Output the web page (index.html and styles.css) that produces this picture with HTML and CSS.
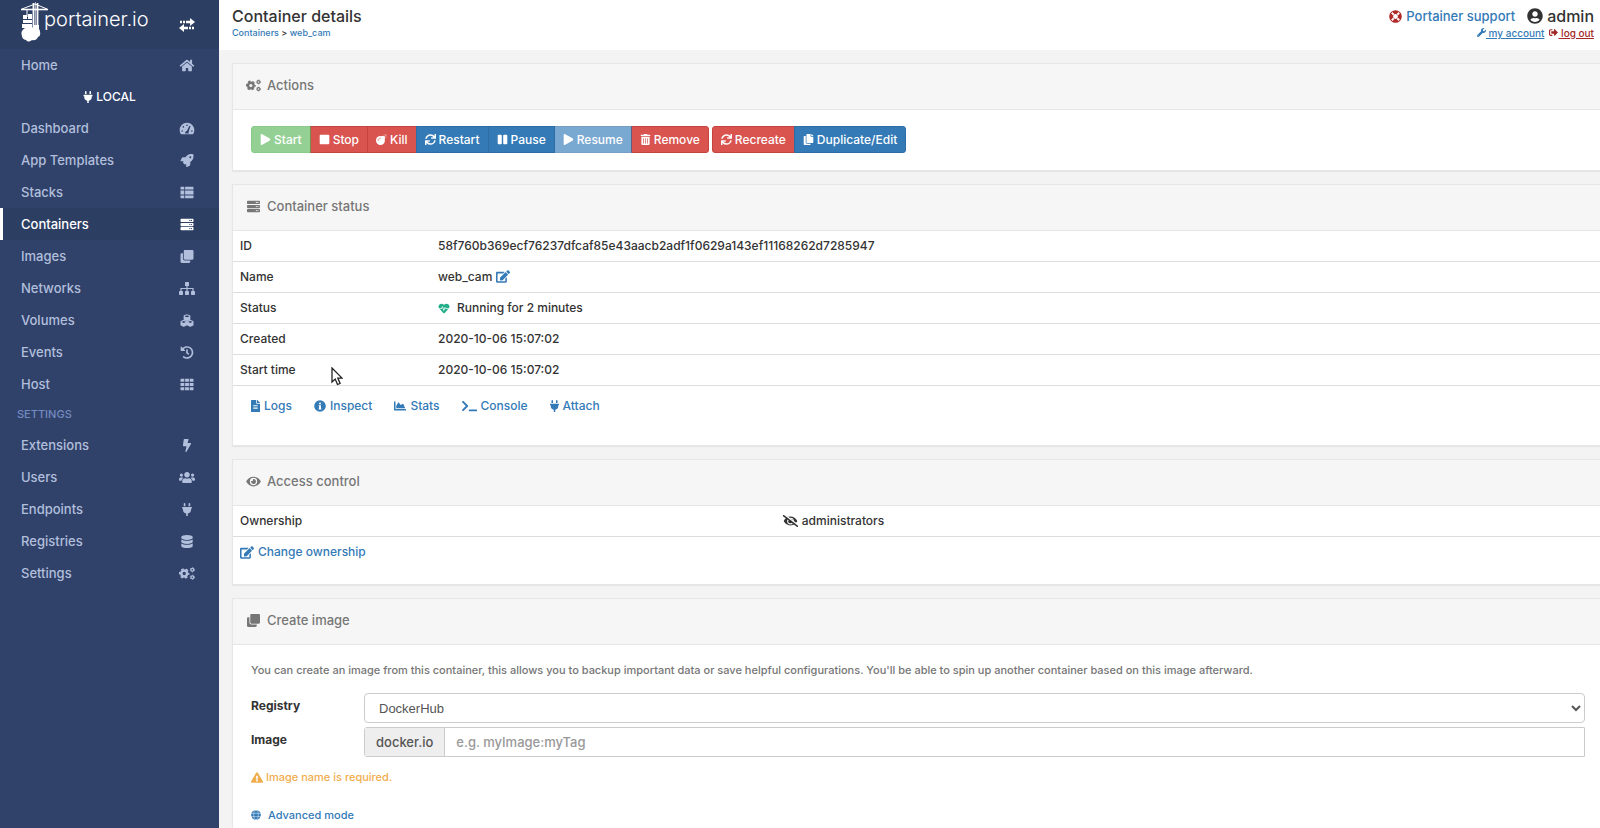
FILE: index.html
```html
<!DOCTYPE html>
<html lang="en">
<head>
<meta charset="utf-8">
<title>Portainer - Container details</title>
<link rel="stylesheet" href="styles.css">
</head>
<body>
<svg class="sprite" aria-hidden="true">
  <symbol id="play" viewBox="0 0 448 512"><path d="M424.4 214.7L72.4 6.6C43.8-10.3 0 6.1 0 47.9V464c0 37.5 40.7 60.1 72.4 41.3l352-208c31.4-18.5 31.5-64.1 0-82.6z"/></symbol>
  <symbol id="stop" viewBox="0 0 448 512"><rect y="32" width="448" height="448" rx="48"/></symbol>
  <symbol id="pause" viewBox="0 0 448 512"><rect y="31" width="192" height="448" rx="48"/><rect x="256" y="31" width="192" height="448" rx="48"/></symbol>
  <symbol id="bomb" viewBox="0 0 512 512"><circle cx="208" cy="304" r="208"/><path d="M270 130l46-46c9-9 25-9 34 0l78 78c9 9 9 25 0 34l-46 46z"/><path d="M385 127l36-36" stroke="currentColor" stroke-width="34"/><path d="M425 60V8M452 87h52M445 67l38-38M405 67l-30-34M445 107l34 30" stroke="currentColor" stroke-width="20" fill="none"/><path d="M96 304c0-62 50-112 112-112" stroke="#d9534f" stroke-width="30" stroke-linecap="round" fill="none"/></symbol>
  <symbol id="sync" viewBox="0 0 512 512"><path d="M440.65 12.57l4 82.77A247.16 247.16 0 0 0 255.83 8C134.73 8 33.91 94.92 12.29 209.82A12 12 0 0 0 24.09 224h49.05a12 12 0 0 0 11.67-9.26 175.91 175.91 0 0 1 317-56.94l-101.46-4.86a12 12 0 0 0-12.57 12v47.41a12 12 0 0 0 12 12H500a12 12 0 0 0 12-12V12a12 12 0 0 0-12-12h-47.37a12 12 0 0 0-11.98 12.57zM255.83 432a175.61 175.61 0 0 1-146-77.8l101.8 4.87a12 12 0 0 0 12.57-12v-47.4a12 12 0 0 0-12-12H12a12 12 0 0 0-12 12V500a12 12 0 0 0 12 12h47.35a12 12 0 0 0 12-12.6l-4.15-82.57A247.17 247.17 0 0 0 255.83 504c121.11 0 221.93-86.92 243.55-201.82a12 12 0 0 0-11.8-14.18h-49.05a12 12 0 0 0-11.67 9.26A175.86 175.86 0 0 1 255.83 432z"/></symbol>
  <symbol id="trash" viewBox="0 0 448 512"><path d="M32 464a48 48 0 0 0 48 48h288a48 48 0 0 0 48-48V128H32zm272-256a16 16 0 0 1 32 0v224a16 16 0 0 1-32 0zm-96 0a16 16 0 0 1 32 0v224a16 16 0 0 1-32 0zm-96 0a16 16 0 0 1 32 0v224a16 16 0 0 1-32 0zM432 32H312l-9.4-18.7A24 24 0 0 0 281.1 0H166.8a23.72 23.72 0 0 0-21.4 13.3L136 32H16A16 16 0 0 0 0 48v32a16 16 0 0 0 16 16h416a16 16 0 0 0 16-16V48a16 16 0 0 0-16-16z"/></symbol>
  <symbol id="copy" viewBox="0 0 448 512"><path d="M320 448v40c0 13.255-10.745 24-24 24H24c-13.255 0-24-10.745-24-24V120c0-13.255 10.745-24 24-24h72v296c0 30.879 25.121 56 56 56h168zm0-344V0H152c-13.255 0-24 10.745-24 24v368c0 13.255 10.745 24 24 24h272c13.255 0 24-10.745 24-24V128H344c-13.2 0-24-10.8-24-24zm120.971-31.029L375.029 7.029A24 24 0 0 0 358.059 0H352v96h96v-6.059a24 24 0 0 0-7.029-16.97z"/></symbol>
  <symbol id="home" viewBox="0 0 576 512"><path d="M280.37 148.26L96 300.11V464a16 16 0 0 0 16 16l112.06-.29a16 16 0 0 0 15.92-16V368a16 16 0 0 1 16-16h64a16 16 0 0 1 16 16v95.64a16 16 0 0 0 16 16.05L464 480a16 16 0 0 0 16-16V300L295.67 148.26a12.19 12.19 0 0 0-15.3 0zM571.6 251.47L488 182.56V44.05a12 12 0 0 0-12-12h-56a12 12 0 0 0-12 12v72.61L318.47 43a48 48 0 0 0-61 0L4.34 251.47a12 12 0 0 0-1.6 16.9l25.5 31A12 12 0 0 0 45.15 301l235.22-193.74a12.19 12.19 0 0 1 15.3 0L530.9 301a12 12 0 0 0 16.9-1.6l25.5-31a12 12 0 0 0-1.7-16.93z"/></symbol>
  <symbol id="plug" viewBox="0 0 384 512"><path d="M320 32a32 32 0 0 0-64 0v96h64zm48 128H16A16 16 0 0 0 0 176v32a16 16 0 0 0 16 16h16v32a160.07 160.07 0 0 0 128 156.8V512h64v-99.2A160.07 160.07 0 0 0 352 256v-32h16a16 16 0 0 0 16-16v-32a16 16 0 0 0-16-16zM128 32a32 32 0 0 0-64 0v96h64z"/></symbol>
  <symbol id="gauge" viewBox="0 0 576 512"><path fill-rule="evenodd" d="M288 32C129 32 0 161 0 320c0 53 14 102 39 145 6 9 16 15 27 15h444c11 0 21-6 27-15 25-43 39-92 39-145C576 161 447 32 288 32zM288 96a32 32 0 1 1 0 64 32 32 0 0 1 0-64zM96 384a32 32 0 1 1 0-64 32 32 0 0 1 0 64zM144 224a32 32 0 1 1 0-64 32 32 0 0 1 0 64zM480 320a32 32 0 1 1 0 64 32 32 0 0 1 0-64zM423 177l-77 230c17 16 19 32 9 41H221c-17-34 6-88 61-95l96-191c11-21 50-9 45 15z"/></symbol>
  <symbol id="rocket" viewBox="0 0 512 512"><path d="M505.12 19.09c-1.19-5.53-6.66-11-12.21-12.18C460.71 0 435.51 0 410.4 0 307.2 0 245.27 55.2 199.05 128H94.83c-16.35 0-35.56 11.88-42.87 26.48L2.53 253.29A28.4 28.4 0 0 0 0 264a24 24 0 0 0 24 24h103.84l-22.47 22.47a32 32 0 0 0 0 45.25l50.9 50.91a32 32 0 0 0 45.26 0L224 384.16V488a24 24 0 0 0 24 24 28.6 28.6 0 0 0 10.69-2.53l98.73-49.39c14.63-7.29 26.5-26.5 26.5-42.86V312.79c72.59-46.3 128-108.4 128-211.09.1-25.2.1-50.4-6.8-82.61zM384 168a40 40 0 1 1 40-40 40 40 0 0 1-40 40z"/></symbol>
  <symbol id="thlist" viewBox="0 0 512 512"><path d="M0 56q0-24 24-24h102q24 0 24 24v80H0zM182 32h306q24 0 24 24v80H182zM0 180h150v152H0zM182 180h330v152H182zM0 376h150v104H24q-24 0-24-24zM182 376h330v80q0 24-24 24H182z"/></symbol>
  <symbol id="server" viewBox="0 0 512 512"><path fill-rule="evenodd" d="M32 32h448q32 0 32 32v64q0 32-32 32H32q-32 0-32-32V64q0-32 32-32zM408 96a24 24 0 1 0 48 0 24 24 0 0 0-48 0zM344 96a24 24 0 1 0 48 0 24 24 0 0 0-48 0zM32 192h448q32 0 32 32v64q0 32-32 32H32q-32 0-32-32v-64q0-32 32-32zM408 256a24 24 0 1 0 48 0 24 24 0 0 0-48 0zM344 256a24 24 0 1 0 48 0 24 24 0 0 0-48 0zM32 352h448q32 0 32 32v64q0 32-32 32H32q-32 0-32-32v-64q0-32 32-32zM408 416a24 24 0 1 0 48 0 24 24 0 0 0-48 0zM344 416a24 24 0 1 0 48 0 24 24 0 0 0-48 0z"/></symbol>
  <symbol id="clone" viewBox="0 0 512 512"><path d="M464 0c26.51 0 48 21.49 48 48v288c0 26.51-21.49 48-48 48H176c-26.51 0-48-21.49-48-48V48c0-26.51 21.49-48 48-48h288M176 416c-44.112 0-80-35.888-80-80V128H48c-26.51 0-48 21.49-48 48v288c0 26.51 21.49 48 48 48h288c26.51 0 48-21.49 48-48v-48H176z"/></symbol>
  <symbol id="sitemap" viewBox="0 0 640 512"><rect x="240" width="160" height="160" rx="28"/><rect y="352" width="160" height="160" rx="28"/><rect x="240" y="352" width="160" height="160" rx="28"/><rect x="480" y="352" width="160" height="160" rx="28"/><path d="M80 360V256h480v104M320 150v210" fill="none" stroke="currentColor" stroke-width="48"/></symbol>
  <symbol id="cubes" viewBox="0 0 512 512"><path fill-rule="evenodd" d="M256 8l116 44q16 6 16 22v128q0 16-14 23l-118 55-118-55q-14-7-14-23V74q0-16 16-22zM172 80v14l84 36 84-36V80l-84-32zM126 230l116 46q14 6 14 22v136q0 16-12 22l-106 48q-12 6-24 0L12 456q-12-6-12-22V298q0-16 14-22zM50 304v12l76 34 76-34v-12l-76-30zM386 230l112 46q14 6 14 22v136q0 16-12 22l-102 48q-12 6-24 0l-106-48q-12-6-12-22V298q0-16 14-22zM310 304v12l76 34 76-34v-12l-76-30z"/></symbol>
  <symbol id="history" viewBox="0 0 512 512"><path d="M504 255.531c.253 136.64-111.18 248.372-247.82 248.468-59.015.042-113.223-20.53-155.822-54.911-11.077-8.94-11.905-25.541-1.839-35.607l11.267-11.267c8.609-8.609 22.353-9.551 31.891-1.984C173.062 425.135 212.781 440 256 440c101.705 0 184-82.311 184-184 0-101.705-82.311-184-184-184-48.814 0-93.149 18.969-126.068 49.932l50.754 50.754c10.08 10.08 2.941 27.314-11.313 27.314H24c-8.837 0-16-7.163-16-16V38.627c0-14.254 17.234-21.393 27.314-11.314l49.372 49.372C129.209 34.136 189.552 8 256 8c136.81 0 247.747 110.78 248 247.531zm-180.912 78.784l9.823-12.63c8.138-10.463 6.253-25.542-4.21-33.679L288 256.349V152c0-13.255-10.745-24-24-24h-16c-13.255 0-24 10.745-24 24v135.651l65.409 50.874c10.463 8.137 25.541 6.253 33.679-4.21z"/></symbol>
  <symbol id="grid" viewBox="0 0 512 512"><path d="M0 56q0-24 24-24h126v120H0zM182 32h150v120H182zM362 32h126q24 0 24 24v96H362zM0 196h150v120H0zM182 196h150v120H182zM362 196h150v120H362zM0 360h150v120H24q-24 0-24-24zM182 360h150v120H182zM362 360h150v96q0 24-24 24H362z"/></symbol>
  <symbol id="bolt" viewBox="0 0 320 512"><path d="M296 160H180.6l42.6-129.8C227.2 15 215.7 0 200 0H56C44 0 33.8 8.9 32.2 20.8l-32 240C-1.7 275.2 9.5 288 24 288h118.7L96.6 482.5c-3.6 15.2 8 29.5 23.3 29.5 8.4 0 16.4-4.4 20.8-12l176-304c9.3-15.9-2.2-36-20.7-36z"/></symbol>
  <symbol id="users" viewBox="0 0 640 512"><path d="M96 224c35.3 0 64-28.7 64-64s-28.7-64-64-64-64 28.7-64 64 28.7 64 64 64zm448 0c35.3 0 64-28.7 64-64s-28.7-64-64-64-64 28.7-64 64 28.7 64 64 64zm32 32h-64c-17.6 0-33.5 7.1-45.1 18.6 40.3 22.1 68.9 62 75.1 109.4h66c17.7 0 32-14.3 32-32v-32c0-35.3-28.7-64-64-64zm-256 0c61.9 0 112-50.1 112-112S381.9 32 320 32 208 82.1 208 144s50.1 112 112 112zm76.8 32h-8.3c-20.8 10-43.9 16-68.5 16s-47.6-6-68.5-16h-8.3C179.6 288 128 339.6 128 403.2V432c0 26.5 21.5 48 48 48h288c26.5 0 48-21.5 48-48v-28.8c0-63.6-51.6-115.2-115.2-115.2zm-223.7-13.4C161.5 263.1 145.6 256 128 256H64c-35.3 0-64 28.7-64 64v32c0 17.7 14.3 32 32 32h65.9c6.3-47.4 34.9-87.3 75.2-109.4z"/></symbol>
  <symbol id="database" viewBox="0 0 448 512"><path d="M448 73.143v45.714C448 159.143 347.667 192 224 192S0 159.143 0 118.857V73.143C0 32.857 100.333 0 224 0s224 32.857 224 73.143zM448 176v102.857C448 319.143 347.667 352 224 352S0 319.143 0 278.857V176c48.125 33.143 136.208 48.572 224 48.572S399.874 209.143 448 176zm0 160v102.857C448 479.143 347.667 512 224 512S0 479.143 0 438.857V336c48.125 33.143 136.208 48.572 224 48.572S399.874 369.143 448 336z"/></symbol>
  <symbol id="cogs" viewBox="0 0 640 512"><g fill="none" stroke="currentColor"><circle cx="208" cy="256" r="118" stroke-width="100"/><circle cx="208" cy="256" r="180" stroke-width="60" stroke-dasharray="100 88.500" stroke-dashoffset="50"/><circle cx="534" cy="106" r="58" stroke-width="50"/><circle cx="534" cy="106" r="90" stroke-width="28" stroke-dasharray="50 44"/><circle cx="534" cy="406" r="58" stroke-width="50"/><circle cx="534" cy="406" r="90" stroke-width="28" stroke-dasharray="50 44"/></g></symbol>
  <symbol id="eye" viewBox="0 0 576 512"><path d="M572.52 241.4C518.29 135.59 410.93 64 288 64S57.68 135.64 3.48 241.41a32.35 32.35 0 0 0 0 29.19C57.71 376.41 165.07 448 288 448s230.32-71.64 284.52-177.41a32.35 32.35 0 0 0 0-29.19zM288 400a144 144 0 1 1 144-144 143.93 143.93 0 0 1-144 144zm0-240a95.31 95.31 0 0 0-25.31 3.79 47.85 47.85 0 0 1-66.9 66.9A95.78 95.78 0 1 0 288 160z"/></symbol>
  <symbol id="eyeslash" viewBox="0 0 640 512"><path transform="translate(32 0)" d="M572.52 241.4C518.29 135.59 410.93 64 288 64S57.68 135.64 3.48 241.41a32.35 32.35 0 0 0 0 29.19C57.71 376.41 165.07 448 288 448s230.32-71.64 284.52-177.41a32.35 32.35 0 0 0 0-29.19zM288 400a144 144 0 1 1 144-144 143.93 143.93 0 0 1-144 144zm0-240a95.31 95.31 0 0 0-25.31 3.79 47.85 47.85 0 0 1-66.9 66.9A95.78 95.78 0 1 0 288 160z"/><path d="M50-26l610 472" stroke="#fff" stroke-width="60"/><path d="M20 24l600 464" stroke="currentColor" stroke-width="62" stroke-linecap="round"/></symbol>
  <symbol id="file" viewBox="0 0 384 512"><path d="M224 136V0H24C10.7 0 0 10.7 0 24v464c0 13.3 10.7 24 24 24h336c13.3 0 24-10.7 24-24V160H248c-13.2 0-24-10.8-24-24zm64 236c0 6.6-5.4 12-12 12H108c-6.6 0-12-5.4-12-12v-8c0-6.6 5.4-12 12-12h168c6.6 0 12 5.4 12 12v8zm0-64c0 6.6-5.4 12-12 12H108c-6.6 0-12-5.4-12-12v-8c0-6.6 5.4-12 12-12h168c6.6 0 12 5.4 12 12v8zm0-72v8c0 6.6-5.4 12-12 12H108c-6.6 0-12-5.4-12-12v-8c0-6.6 5.4-12 12-12h168c6.6 0 12 5.4 12 12zm96-114.1v6.1H256V0h6.1c6.4 0 12.5 2.5 17 7l97.9 98c4.5 4.5 7 10.6 7 16.9z"/></symbol>
  <symbol id="info" viewBox="0 0 512 512"><path fill-rule="evenodd" d="M256 8a248 248 0 1 0 0 496 248 248 0 0 0 0-496zM256 106a42 42 0 1 1 0 84 42 42 0 0 1 0-84zM200 224h96v136h24v40H192v-40h24v-96h-16z"/></symbol>
  <symbol id="chart" viewBox="0 0 512 512"><path d="M500 384c6.600 0 12 5.400 12 12v40c0 6.600-5.400 12-12 12H12c-6.600 0-12-5.400-12-12V76c0-6.600 5.400-12 12-12h40c6.600 0 12 5.400 12 12v308h436zM372.700 159.500L288 216l-85.300-113.700c-5.100-6.800-15.500-6.300-19.900 1L96 248v104h384l-89.900-187.800c-3.200-6.500-11.400-8.700-17.400-4.700z"/></symbol>
  <symbol id="terminal" viewBox="0 0 640 512"><path d="M257.981 272.971L63.638 467.314c-9.373 9.373-24.569 9.373-33.941 0L7.029 444.647c-9.357-9.357-9.375-24.522-.04-33.901L161.011 256 6.990 101.255c-9.335-9.379-9.317-24.544.04-33.901l22.667-22.667c9.373-9.373 24.569-9.373 33.941 0L257.981 239.030c9.373 9.372 9.373 24.568 0 33.941zM640 456v-32c0-13.255-10.745-24-24-24H312c-13.255 0-24 10.745-24 24v32c0 13.255 10.745 24 24 24h304c13.255 0 24-10.745 24-24z"/></symbol>
  <symbol id="edit" viewBox="0 0 576 512"><path d="M402.600 83.200l90.200 90.200c3.800 3.800 3.800 10 0 13.800L274.400 405.600l-92.800 10.300c-12.400 1.400-22.900-9.100-21.500-21.500l10.300-92.800L388.800 83.200c3.800-3.800 10-3.800 13.800 0zm162-22.900l-48.800-48.800c-15.200-15.200-39.900-15.200-55.200 0l-35.400 35.400c-3.800 3.800-3.800 10 0 13.800l90.200 90.200c3.800 3.800 10 3.800 13.800 0l35.400-35.400c15.200-15.300 15.200-40 0-55.200zM384 346.200V448H64V128h229.800c3.200 0 6.200-1.300 8.500-3.500l40-40c7.600-7.600 2.200-20.500-8.500-20.500H48C21.500 64 0 85.500 0 112v352c0 26.500 21.500 48 48 48h352c26.500 0 48-21.500 48-48V306.200c0-10.700-12.900-16-20.500-8.500l-40 40c-2.200 2.300-3.500 5.300-3.500 8.500z"/></symbol>
  <symbol id="heart" viewBox="0 0 512 512"><path d="M256 482q-12 0-22-9L40 273C-14 216-12 116 46 66 107 14 195 24 249 80l7 7 7-7c54-56 142-66 203-14 58 50 60 150 6 207L278 473q-10 9-22 9z"/><path d="M0 262h140l44-96 62 180 56-140 34 56h176" fill="none" stroke="#fff" stroke-width="36"/></symbol>
  <symbol id="warning" viewBox="0 0 576 512"><path d="M569.517 440.013C587.975 472.007 564.806 512 527.940 512H48.054c-36.937 0-59.999-40.055-41.577-71.987L246.423 23.985c18.467-32.009 64.720-31.951 83.154 0l239.940 416.028zM288 354c-25.405 0-46 20.595-46 46s20.595 46 46 46 46-20.595 46-46-20.595-46-46-46zm-43.673-165.346l7.418 136c.347 6.364 5.609 11.346 11.982 11.346h48.546c6.373 0 11.635-4.982 11.982-11.346l7.418-136c.375-6.874-5.098-12.654-11.982-12.654h-63.383c-6.884 0-12.356 5.780-11.981 12.654z"/></symbol>
  <symbol id="globe" viewBox="0 0 512 512"><circle cx="256" cy="256" r="248"/><path d="M0 172h512M0 340h512" stroke="#fff" stroke-width="24"/><ellipse cx="256" cy="256" rx="116" ry="250" fill="none" stroke="#fff" stroke-width="24"/></symbol>
  <symbol id="ring" viewBox="0 0 512 512"><circle cx="256" cy="256" r="172" fill="none" stroke="currentColor" stroke-width="152"/><path d="M110 110l72 72M402 110l-72 72M110 402l72-72M402 402l-72-72" stroke="#fff" stroke-width="76"/></symbol>
  <symbol id="user" viewBox="0 0 496 512"><path d="M248 8C111 8 0 119 0 256s111 248 248 248 248-111 248-248S385 8 248 8zm0 96c48.600 0 88 39.400 88 88s-39.400 88-88 88-88-39.400-88-88 39.400-88 88-88zm0 344c-58.700 0-111.300-26.600-146.500-68.200 18.800-35.400 55.600-59.800 98.500-59.800 2.400 0 4.800.4 7.100 1.100 13 4.200 26.600 6.900 40.900 6.900 14.300 0 28-2.700 40.900-6.900 2.300-.7 4.700-1.100 7.100-1.100 42.900 0 79.700 24.400 98.500 59.800C359.300 421.400 306.700 448 248 448z"/></symbol>
  <symbol id="wrench" viewBox="0 0 512 512"><path d="M507.730 109.100c-2.240-9.030-13.540-12.090-20.120-5.510l-74.360 74.360-67.880-11.310-11.310-67.880 74.360-74.360c6.620-6.620 3.430-17.900-5.660-20.160-47.380-11.740-99.550.91-136.580 37.930-39.640 39.640-50.550 97.100-34.050 147.200L18.740 402.760c-24.990 24.990-24.990 65.510 0 90.500 24.990 24.990 65.510 24.990 90.500 0l213.210-213.210c50.120 16.710 107.470 5.680 147.370-34.220 37.070-37.070 49.700-89.320 37.910-136.730zM64 472c-13.250 0-24-10.750-24-24 0-13.260 10.750-24 24-24s24 10.740 24 24c0 13.250-10.750 24-24 24z"/></symbol>
  <symbol id="signout" viewBox="0 0 512 512"><path d="M497 273L329 441c-15 15-41 4.500-41-17v-96H152c-13.300 0-24-10.700-24-24v-96c0-13.300 10.700-24 24-24h136V88c0-21.400 25.900-32 41-17l168 168c9.300 9.400 9.300 24.600 0 34zM192 436v-40c0-6.600-5.400-12-12-12H96c-17.700 0-32-14.300-32-32V160c0-17.700 14.300-32 32-32h84c6.600 0 12-5.400 12-12V76c0-6.600-5.400-12-12-12H96c-53 0-96 43-96 96v192c0 53 43 96 96 96h84c6.600 0 12-5.400 12-12z"/></symbol>
</svg>
<div class="page">
  <aside class="sidebar">
    <div class="brand">
      <a class="logo" href="#" aria-label="portainer.io">
        <svg class="crane" viewBox="0 0 28 40" aria-hidden="true"><g fill="none" stroke="#fff"><path d="M0 7.500h27" stroke-width="1.600"/><path d="M1 7L14 2l12 5M6 8v7" stroke-width="1"/><path d="M12.500 1v24M16.500 1v24" stroke-width="1.800"/><path d="M14.500 0v28" stroke-width="1" opacity=".6"/></g><path fill="#fff" d="M2 13h4v4H2zM7 12h4v5H7zM2 18h9v3H2zM1 22h10v4H1zM12 23h6v4h-6zM4 26q3-3 6 0 3-2 5 0 4 0 4 4 1 4-2 5-2 4-6 3-4 3-6 0-4-1-4-4-2-5 3-8z"/></svg>
        <span class="wordmark">portainer.io</span>
      </a>
      <button class="toggle" type="button" aria-label="Toggle sidebar"><svg viewBox="0 0 16 14" aria-hidden="true"><path d="M1 4h2M4 4h2M7 4h5M15 10h-2M12 10h-2M9 10H4" stroke="#fff" stroke-width="2.400"/><path fill="#fff" d="M11 0l5 4-5 4zM5 6v8l-5-4z"/></svg></button>
    </div>
    <nav>
      <a class="item" href="#"><span>Home</span><svg class="icon"><use href="#home"/></svg></a>
      <div class="local"><svg class="icon"><use href="#plug"/></svg>LOCAL</div>
      <a class="item" href="#"><span>Dashboard</span><svg class="icon"><use href="#gauge"/></svg></a>
      <a class="item" href="#"><span>App Templates</span><svg class="icon"><use href="#rocket"/></svg></a>
      <a class="item" href="#"><span>Stacks</span><svg class="icon"><use href="#thlist"/></svg></a>
      <a class="item active" href="#"><span>Containers</span><svg class="icon"><use href="#server"/></svg></a>
      <a class="item" href="#"><span>Images</span><svg class="icon"><use href="#clone"/></svg></a>
      <a class="item" href="#"><span>Networks</span><svg class="icon"><use href="#sitemap"/></svg></a>
      <a class="item" href="#"><span>Volumes</span><svg class="icon"><use href="#cubes"/></svg></a>
      <a class="item" href="#"><span>Events</span><svg class="icon"><use href="#history"/></svg></a>
      <a class="item" href="#"><span>Host</span><svg class="icon"><use href="#grid"/></svg></a>
      <div class="section">SETTINGS</div>
      <a class="item" href="#"><span>Extensions</span><svg class="icon"><use href="#bolt"/></svg></a>
      <a class="item" href="#"><span>Users</span><svg class="icon"><use href="#users"/></svg></a>
      <a class="item" href="#"><span>Endpoints</span><svg class="icon"><use href="#plug"/></svg></a>
      <a class="item" href="#"><span>Registries</span><svg class="icon"><use href="#database"/></svg></a>
      <a class="item" href="#"><span>Settings</span><svg class="icon"><use href="#cogs"/></svg></a>
    </nav>
  </aside>
  <div class="content">
    <header class="topbar">
      <div>
        <h1>Container details</h1>
        <div class="crumbs"><a href="#">Containers</a> &gt; <a href="#">web_cam</a></div>
      </div>
      <div class="account">
        <div class="account-main">
          <a class="support" href="#"><svg class="icon"><use href="#ring"/></svg>Portainer support</a>
          <span class="who"><svg class="icon"><use href="#user"/></svg>admin</span>
        </div>
        <div class="account-links">
          <a href="#"><svg class="icon"><use href="#wrench"/></svg> my account</a>
          <a class="logout" href="#"><svg class="icon"><use href="#signout"/></svg> log out</a>
        </div>
      </div>
    </header>
    <main>
      <section class="widget">
        <h2><svg class="icon"><use href="#cogs"/></svg>Actions</h2>
        <div class="actions">
          <div class="group">
            <button class="btn green" type="button" disabled><svg class="icon"><use href="#play"/></svg>Start</button>
            <button class="btn red" type="button"><svg class="icon"><use href="#stop"/></svg>Stop</button>
            <button class="btn red" type="button"><svg class="icon"><use href="#bomb"/></svg>Kill</button>
            <button class="btn blue" type="button"><svg class="icon"><use href="#sync"/></svg>Restart</button>
            <button class="btn blue" type="button"><svg class="icon"><use href="#pause"/></svg>Pause</button>
            <button class="btn blue" type="button" disabled><svg class="icon"><use href="#play"/></svg>Resume</button>
            <button class="btn red" type="button"><svg class="icon"><use href="#trash"/></svg>Remove</button>
          </div>
          <div class="group">
            <button class="btn red" type="button"><svg class="icon"><use href="#sync"/></svg>Recreate</button>
            <button class="btn blue" type="button"><svg class="icon"><use href="#copy"/></svg>Duplicate/Edit</button>
          </div>
        </div>
      </section>
      <section class="widget">
        <h2><svg class="icon"><use href="#server"/></svg>Container status</h2>
        <table class="status">
          <tr><th scope="row">ID</th><td>58f760b369ecf76237dfcaf85e43aacb2adf1f0629a143ef11168262d7285947</td></tr>
          <tr><th scope="row">Name</th><td>web_cam <a href="#" aria-label="Edit name"><svg class="icon"><use href="#edit"/></svg></a></td></tr>
          <tr><th scope="row">Status</th><td><svg class="icon healthy"><use href="#heart"/></svg>Running for 2 minutes</td></tr>
          <tr><th scope="row">Created</th><td>2020-10-06 15:07:02</td></tr>
          <tr><th scope="row">Start time</th><td>2020-10-06 15:07:02</td></tr>
        </table>
        <div class="tools">
          <a href="#"><svg class="icon narrow"><use href="#file"/></svg>Logs</a>
          <a href="#"><svg class="icon"><use href="#info"/></svg>Inspect</a>
          <a href="#"><svg class="icon"><use href="#chart"/></svg>Stats</a>
          <a href="#"><svg class="icon wide"><use href="#terminal"/></svg>Console</a>
          <a href="#"><svg class="icon narrow"><use href="#plug"/></svg>Attach</a>
        </div>
      </section>
      <section class="widget">
        <h2><svg class="icon"><use href="#eye"/></svg>Access control</h2>
        <table class="access">
          <tr><th scope="row">Ownership</th><td><svg class="icon"><use href="#eyeslash"/></svg>administrators</td></tr>
        </table>
        <div class="change"><a href="#"><svg class="icon"><use href="#edit"/></svg>Change ownership</a></div>
      </section>
      <section class="widget">
        <h2><svg class="icon"><use href="#clone"/></svg>Create image</h2>
        <form class="create">
          <p class="help">You can create an image from this container, this allows you to backup important data or save helpful configurations. You'll be able to spin up another container based on this image afterward.</p>
          <div class="field">
            <label for="registry">Registry</label>
            <select id="registry"><option>DockerHub</option></select>
          </div>
          <div class="field">
            <label for="image">Image</label>
            <div class="input-group"><span>docker.io</span><input id="image" type="text" placeholder="e.g. myImage:myTag"></div>
          </div>
          <div class="warning"><svg class="icon"><use href="#warning"/></svg>Image name is required.</div>
          <a class="advanced" href="#"><svg class="icon"><use href="#globe"/></svg>Advanced mode</a>
        </form>
      </section>
    </main>
  </div>
</div>
<svg class="pointer" viewBox="0 0 12 19" aria-hidden="true"><path d="M1 1v14l3.200-3 2.300 5.500 2.600-1-2.300-5.400H11z" fill="#fff" stroke="#222" stroke-width="1.300"/></svg>
</body>
</html>
```

FILE: styles.css
```css
* { box-sizing: border-box; }

body {
  margin: 0;
  font-family: Inter, "Open Sans", sans-serif;
  font-size: 12px;
  font-weight: 500;
  line-height: 18px;
  color: #333;
  background: #f3f3f3;
}

a { color: #337ab7; text-decoration: none; }
.sprite { position: absolute; width: 0; height: 0; }
.icon { width: 14px; height: 12px; flex: none; fill: currentColor; }

.page { display: flex; height: 100vh; overflow: hidden; }

.sidebar { width: 219px; flex: none; background: #30426a; color: #b2bfdc; }
.brand { display: flex; justify-content: space-between; height: 49px; padding: 0 24px 0 21px; background: #2d3e63; }
.logo { display: flex; color: #fff; }
.crane { width: 28px; height: 40px; margin-top: 2px; }
.wordmark { font-family: Inter, sans-serif; font-size: 20px; font-weight: 300; line-height: 38px; margin-left: -5px; }
.toggle { align-self: center; display: flex; padding: 0; border: 0; background: none; }
.toggle svg { width: 16px; height: 14px; }
.item { display: flex; align-items: center; justify-content: space-between; height: 32px; padding: 0 24px 0 18px; border-left: 3px solid transparent; color: inherit; font-size: 13px; }
.item .icon { width: 16px; height: 13px; }
.active { background: #2d3e63; border-left-color: #fff; color: #fff; }
.local { display: flex; align-items: center; justify-content: center; gap: 3px; height: 31px; color: #fff; font-size: 12px; }
.local .icon { width: 10px; }
.section { height: 29px; padding-left: 17px; color: #738bc0; font-size: 11px; line-height: 29px; }

.content { flex: 1; min-width: 0; }
.topbar { display: flex; justify-content: space-between; height: 50px; padding: 6px 6px 0 13px; background: #fff; }
h1 { margin: 0; font-size: 16px; font-weight: 500; line-height: 20px; }
.crumbs { font-size: 9px; line-height: 13px; }
.account { text-align: right; }
.account-main { display: flex; align-items: center; justify-content: flex-end; gap: 12px; height: 20px; font-size: 16px; }
.support, .who { display: flex; align-items: center; gap: 4px; }
.support { font-size: 13px; }
.support .icon { color: #b02a2a; width: 13px; height: 13px; }
.who .icon { width: 16px; height: 16px; }
.account-links { display: flex; justify-content: flex-end; gap: 5px; font-size: 10px; line-height: 14px; }
.account-links a { text-decoration: underline; }
.account-links .icon { width: 9px; height: 9px; }
.account-links .logout { color: #a32626; }

main { display: grid; gap: 13px; padding: 13px 0 0 13px; }
.widget { border: 1px solid #e6e6e6; border-right: 0; background: #fff; box-shadow: 0 1px 1px rgba(0, 0, 0, .05); }
h2 { display: flex; align-items: center; gap: 6px; height: 46px; margin: 0; padding: 0 13px 3px; border-bottom: 1px solid #e6e6e6; background: #f6f6f6; color: #767676; font-size: 13px; font-weight: 500; }
h2 .icon { width: 15px; height: 13px; }

.actions { display: flex; gap: 3px; padding: 16px 18px 17px; }
.group { display: flex; }
.btn { display: flex; align-items: center; gap: 3px; height: 27px; padding: 0 8px; border: 1px solid; color: #fff; font: inherit; }
.btn + .btn { margin-left: -1px; }
.btn:first-child { border-radius: 3px 0 0 3px; }
.btn:last-child { border-radius: 0 3px 3px 0; }
.btn .icon { width: 11px; height: 11px; }
.green { background: #5cb85c; border-color: #4cae4c; }
.red { background: #d9534f; border-color: #c64440; }
.blue { background: #337ab7; border-color: #2e6da4; }
.btn:disabled { opacity: .65; }

table { width: 100%; border-collapse: separate; border-spacing: 0; table-layout: fixed; }
th, td { height: 31px; padding: 0 7px; border-bottom: 1px solid #ddd; text-align: left; font-weight: 500; }
th { width: 198px; }
td .icon { vertical-align: -2px; }
.status .icon { height: 13px; }
.status .healthy { width: 12px; height: 11px; margin-right: 7px; color: #23ae89; }
.access th { width: 40%; }
.access td { padding-left: 3px; }
.access td .icon { width: 15px; margin-right: 4px; }
.tools { display: flex; gap: 22px; padding: 11px 18px 30px; }
.tools a { display: flex; align-items: center; gap: 4px; }
.tools .icon { width: 12px; }
.tools .narrow { width: 9px; }
.tools .wide { width: 15px; }
.change { padding: 6px 7px 23px; }
.change a { display: flex; align-items: center; gap: 4px; }
.change .icon { height: 13px; }

.create { padding: 16px 15px 32px 18px; }
.help { margin: 0 0 14px; color: #767676; font-size: 11px; }
.field { display: grid; grid-template-columns: 113px 1fr; margin-bottom: 4px; }
.field label { padding-top: 4px; font-weight: 700; }
select, .input-group { width: 100%; height: 30px; border: 1px solid #ccc; border-radius: 4px; background: #fff; }
select { padding: 0 10px; color: #555; font: 13px "Liberation Sans", sans-serif; }
.input-group { display: flex; border-radius: 3px 0 0 3px; }
.input-group span { padding: 0 11px; border-right: 1px solid #ccc; background: #eee; color: #555; font-size: 13px; line-height: 28px; }
.input-group input { flex: 1; min-width: 0; padding: 0 11px; border: 0; background: none; font: inherit; font-size: 13px; }
.input-group input::placeholder { color: #999; }
.warning { display: flex; align-items: center; gap: 3px; margin-top: 11px; color: #f0ad4e; font-size: 11px; }
.warning .icon { width: 12px; height: 11px; }
.advanced { display: flex; align-items: center; gap: 7px; margin-top: 20px; font-size: 11px; }
.advanced .icon { width: 10px; }

.pointer { position: absolute; left: 331px; top: 367px; width: 12px; height: 19px; }
```
